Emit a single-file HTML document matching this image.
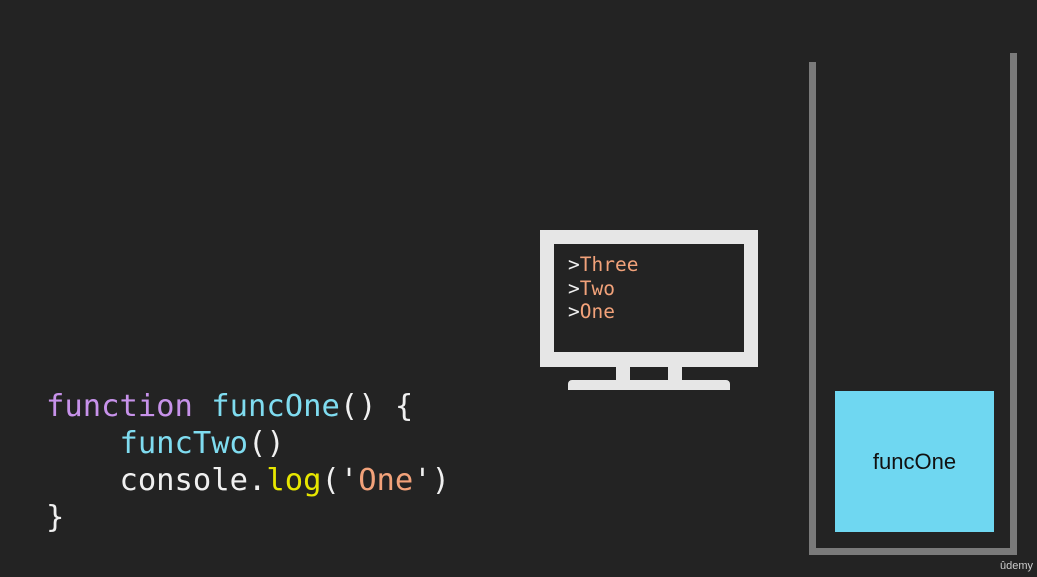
<!DOCTYPE html>
<html><head><style>
body{margin:0;width:1037px;height:577px;background:#232323;position:relative;overflow:hidden;font-family:"DejaVu Sans Mono","Liberation Mono",monospace}
.a{position:absolute}
.code{left:46px;top:388px;font-size:30.5px;line-height:37px;color:#f0f0f0;white-space:pre}
.k{color:#c792ea}.f{color:#7fdcf0}.y{color:#e6e600}.s{color:#f2a27a}
.term{left:568px;top:253px;font-size:19.5px;line-height:23.5px;color:#f0f0f0;white-space:pre}
</style></head><body>
<div class="a" style="left:809px;top:62px;width:7px;height:493px;background:#7a7a7a"></div>
<div class="a" style="left:1010px;top:53px;width:7px;height:502px;background:#7a7a7a"></div>
<div class="a" style="left:809px;top:548px;width:208px;height:7px;background:#7a7a7a"></div>
<div class="a" style="left:835px;top:391px;width:159px;height:141px;background:#6fd7f1;display:flex;align-items:center;justify-content:center;font-family:'Liberation Sans',sans-serif;font-size:22px;color:#111">funcOne</div>
<div class="a" style="left:540px;top:230px;width:218px;height:137px;background:#e6e6e6"></div>
<div class="a" style="left:554px;top:244px;width:190px;height:108px;background:#232323"></div>
<div class="a" style="left:616px;top:366px;width:14px;height:15px;background:#e6e6e6"></div>
<div class="a" style="left:668px;top:366px;width:14px;height:15px;background:#e6e6e6"></div>
<div class="a" style="left:568px;top:380px;width:162px;height:10px;background:#e6e6e6;border-radius:4px 4px 0 0"></div>
<div class="a term">&gt;<span class="s">Three</span>
&gt;<span class="s">Two</span>
&gt;<span class="s">One</span></div>
<div class="a code"><span class="k">function</span> <span class="f">funcOne</span>() {
    <span class="f">funcTwo</span>()
    console.<span class="y">log</span>('<span class="s">One</span>')
}</div>
<div class="a" style="left:1000px;top:560px;font-family:'Liberation Sans',sans-serif;font-size:11px;color:#ccc">ûdemy</div>
</body></html>
